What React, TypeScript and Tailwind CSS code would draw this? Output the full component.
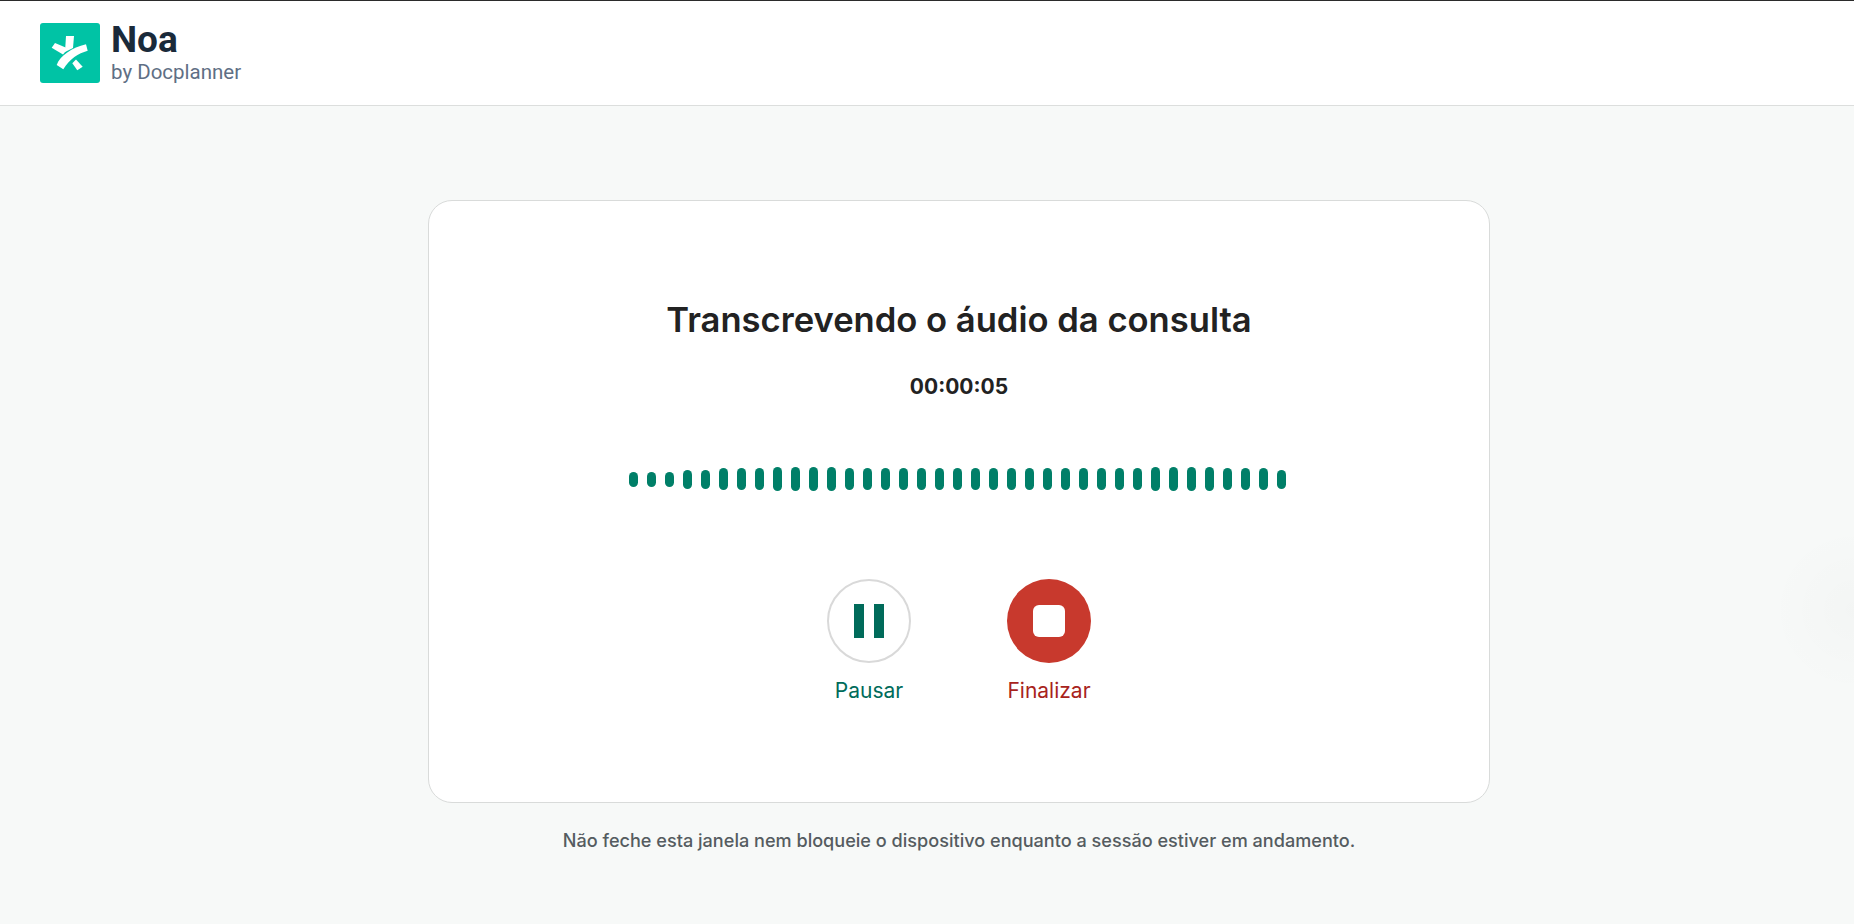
const barHeights = [15, 15, 15, 19, 19, 22, 22, 22, 24, 24, 24, 24, 22, 22, 22, 22, 22, 22, 22, 22, 22, 22, 22, 22, 22, 22, 22, 22, 22, 24, 24, 24, 24, 22, 22, 22, 19]

function NoaLogo() {
  return (
    <div className="h-[60px] w-[60px] rounded-[3px] bg-[#00c3a5]">
      <svg width="60" height="60" viewBox="0 0 60 60" fill="none">
        <path d="M26 13 L34 13 L33 25 L25 29 Z" fill="#fff" />
        <path d="M11.7 24.7 L15 20 L28 25.5 L23 31.5 Z" fill="#fff" />
        <path d="M36 36.5 L42.7 43.7 L37.3 47.3 L32.3 40.3 Z" fill="#fff" />
        <path d="M16.7 42 C20 33 32 24.5 46 21.3 L47.7 27.7 C38 30.5 30 35.5 23.3 46.3 Z" fill="#fff" />
      </svg>
    </div>
  )
}

export default function App() {
  return (
    <div className="relative flex min-h-[924px] flex-col overflow-hidden bg-[#f7f9f8] font-['Inter',sans-serif]">
      <header className="flex h-[106px] items-center gap-[11px] border-t border-b border-t-[#2b2b2b] border-b-[#dcdedd] bg-white pl-10">
        <NoaLogo />
        <div className="font-['Roboto',sans-serif]">
          <div className="-mt-[3px] text-[37px] leading-[40px] font-bold text-[#1a2a3a]">Noa</div>
          <div className="text-[20.5px] leading-[24px] text-[#5f6f85]">by Docplanner</div>
        </div>
      </header>

      <main className="flex flex-col items-center pt-[94px] pl-16">
        <section className="flex h-[603px] w-[1062px] flex-col items-center rounded-[24px] border border-[#d9dbda] bg-white pt-[96px]">
          <h1 className="text-[34.6px] leading-[44px] font-semibold text-[#222]">Transcrevendo o áudio da consulta</h1>
          <div className="mt-[32px] text-[21px] leading-[28px] font-bold text-[#222]">00:00:05</div>

          <div className="mt-[66px] mr-[3px] flex h-[24px] items-center gap-[9px]">
            {barHeights.map((h, i) => (
              <div key={i} className="w-[9px] rounded-full bg-[#007f68]" style={{ height: h }} />
            ))}
          </div>

          <div className="mt-[88px] flex gap-[96px]">
            <div className="flex w-[84px] flex-col items-center">
              <button className="flex h-[84px] w-[84px] items-center justify-center gap-[10px] rounded-full border-2 border-[#d9d9d9] bg-white">
                <span className="h-[34px] w-[10px] bg-[#006b5a]" />
                <span className="h-[34px] w-[10px] bg-[#006b5a]" />
              </button>
              <span className="mt-[14px] text-[21px] leading-[28px] text-[#006b5a]">Pausar</span>
            </div>
            <div className="flex w-[84px] flex-col items-center">
              <button className="flex h-[84px] w-[84px] items-center justify-center rounded-full bg-[#c8392d]">
                <span className="h-[32px] w-[32px] rounded-[6px] bg-white" />
              </button>
              <span className="mt-[14px] text-[21px] leading-[28px] whitespace-nowrap text-[#a8231c]">Finalizar</span>
            </div>
          </div>
        </section>

        <p className="mt-[23px] text-[18.1px] leading-[28px] font-medium text-[#555c60]">
          Não feche esta janela nem bloqueie o dispositivo enquanto a sessão estiver em andamento.
        </p>
      </main>

      <div className="absolute top-[525px] -right-[85px] h-[170px] w-[170px] rounded-full bg-[radial-gradient(circle,rgba(0,0,0,0.015),transparent_70%)]" />
    </div>
  )
}
